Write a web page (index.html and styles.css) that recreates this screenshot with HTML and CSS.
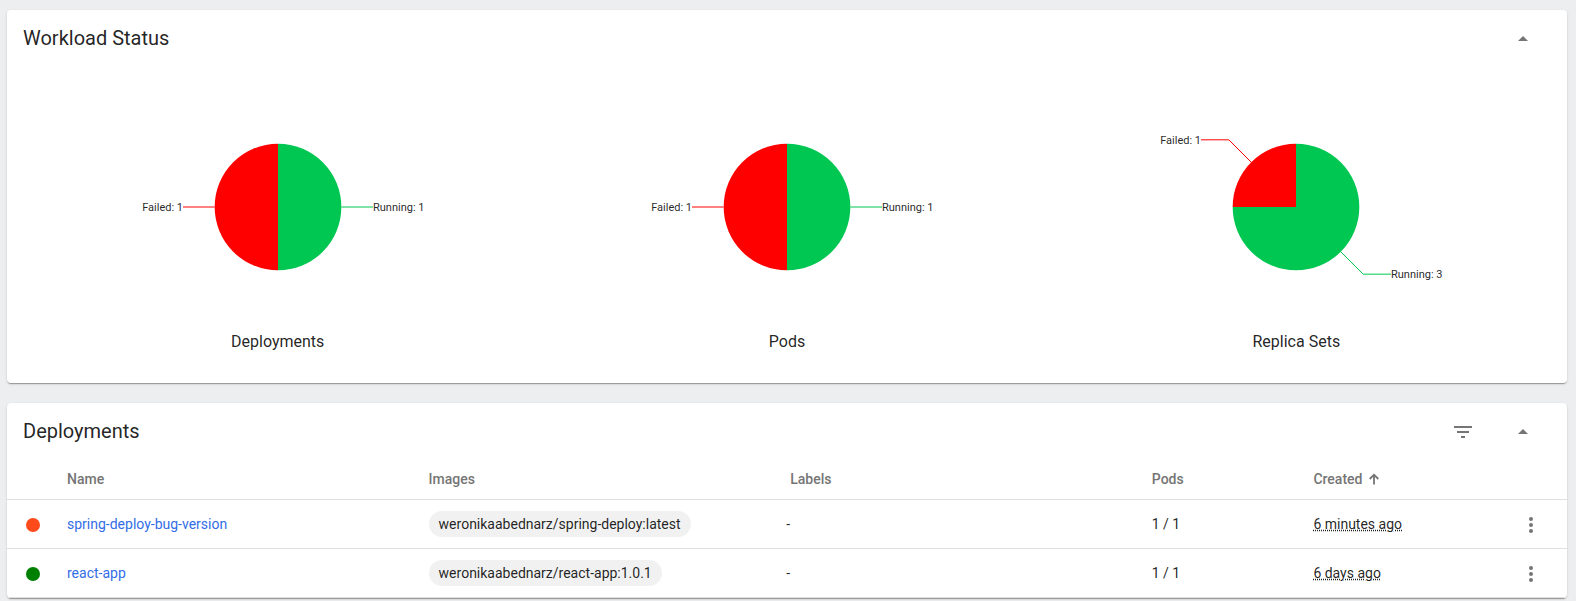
FILE: index.html
```html
<!DOCTYPE html>
<html lang="en">
<head>
<meta charset="utf-8">
<title>Workloads</title>
<link rel="stylesheet" href="styles.css">
</head>
<body>
<section class="card status-card">
  <header class="card-header">
    <h2 class="card-title">Workload Status</h2>
    <svg class="icon toggle" viewBox="0 0 24 24"><path d="M7 14l5-5 5 5z"/></svg>
  </header>
  <div class="charts">
    <figure class="chart">
      <svg class="pie" viewBox="-190 -132 380 264">
        <path class="running" d="M0 0V-63.33A63.33 63.33 0 0 1 0 63.33Z"/>
        <path class="failed" d="M0 0V63.33A63.33 63.33 0 0 1 0 -63.33Z"/>
        <path class="line-running" d="M63.33 0H95"/>
        <path class="line-failed" d="M-63.33 0H-95"/>
        <text class="label" x="95" y="4">Running: 1</text>
        <text class="label end" x="-95" y="4">Failed: 1</text>
      </svg>
      <figcaption class="caption">Deployments</figcaption>
    </figure>
    <figure class="chart">
      <svg class="pie" viewBox="-190 -132 380 264">
        <path class="running" d="M0 0V-63.33A63.33 63.33 0 0 1 0 63.33Z"/>
        <path class="failed" d="M0 0V63.33A63.33 63.33 0 0 1 0 -63.33Z"/>
        <path class="line-running" d="M63.33 0H95"/>
        <path class="line-failed" d="M-63.33 0H-95"/>
        <text class="label" x="95" y="4">Running: 1</text>
        <text class="label end" x="-95" y="4">Failed: 1</text>
      </svg>
      <figcaption class="caption">Pods</figcaption>
    </figure>
    <figure class="chart">
      <svg class="pie" viewBox="-190 -132 380 264">
        <path class="running" d="M0 0V-63.33A63.33 63.33 0 1 1 -63.33 0Z"/>
        <path class="failed" d="M0 0H-63.33A63.33 63.33 0 0 1 0 -63.33Z"/>
        <path class="line-running" d="M44.78 44.78L67.18 67.18H95"/>
        <path class="line-failed" d="M-44.78 -44.78L-67.18 -67.18H-95"/>
        <text class="label" x="95" y="71">Running: 3</text>
        <text class="label end" x="-95" y="-63">Failed: 1</text>
      </svg>
      <figcaption class="caption">Replica Sets</figcaption>
    </figure>
  </div>
</section>
<section class="card">
  <header class="card-header">
    <h2 class="card-title">Deployments</h2>
    <svg class="icon filter" viewBox="0 0 24 24"><path d="M10 18h4v-2h-4v2zM3 6v2h18V6H3zm3 7h12v-2H6v2z"/></svg>
    <svg class="icon toggle" viewBox="0 0 24 24"><path d="M7 14l5-5 5 5z"/></svg>
  </header>
  <div class="table">
    <div class="row head">
      <span></span><span>Name</span><span>Images</span><span>Labels</span><span>Pods</span>
      <span class="sorted">Created<svg class="arrow" viewBox="0 0 12 12"><path d="M6 11.5V2M1.7 6L6 1.7 10.3 6"/></svg></span><span></span>
    </div>
    <div class="row">
      <span class="dot pending"></span>
      <a class="link">spring-deploy-bug-version</a>
      <span><span class="chip">weronikaabednarz/spring-deploy:latest</span></span>
      <span class="empty">-</span><span>1 / 1</span>
      <span><span class="age">6 minutes ago</span></span>
      <svg class="icon menu" viewBox="0 0 24 24"><circle cx="12" cy="6" r="2"/><circle cx="12" cy="12" r="2"/><circle cx="12" cy="18" r="2"/></svg>
    </div>
    <div class="row">
      <span class="dot ok"></span>
      <a class="link">react-app</a>
      <span><span class="chip">weronikaabednarz/react-app:1.0.1</span></span>
      <span class="empty">-</span><span>1 / 1</span>
      <span><span class="age">6 days ago</span></span>
      <svg class="icon menu" viewBox="0 0 24 24"><circle cx="12" cy="6" r="2"/><circle cx="12" cy="12" r="2"/><circle cx="12" cy="18" r="2"/></svg>
    </div>
  </div>
</section>
</body>
</html>
```
FILE: styles.css
```css
* { box-sizing: border-box; }
body {
  margin: 0;
  padding: 10px 9px 0 7px;
  height: 601px;
  overflow: hidden;
  background: #edeef0;
  color: rgba(0, 0, 0, .87);
  font: 14px/20px Roboto, sans-serif;
}
.card {
  background: #fff;
  border-radius: 4px;
  box-shadow: 0 2px 1px -1px rgba(0, 0, 0, .2), 0 1px 1px rgba(0, 0, 0, .14), 0 1px 3px rgba(0, 0, 0, .12);
}
.status-card { height: 373px; margin-bottom: 20px; }
.card-header {
  display: flex;
  align-items: center;
  height: 56px;
  padding: 0 32px 0 16px;
}
.card-title { flex: 1; margin: 0; font-size: 20px; font-weight: 400; line-height: 32px; }
.icon { width: 24px; height: 24px; fill: #757575; }
.filter, .toggle { margin-top: 2px; }
.filter { margin-right: 36px; }
.charts { display: grid; grid-template-columns: repeat(3, 1fr); padding: 9px 16px 0; }
.chart { display: flex; flex-direction: column; align-items: center; margin: 0; }
.pie { width: 380px; height: 264px; }
.running { fill: #00c752; }
.failed { fill: #f00; }
.line-running, .line-failed { fill: none; stroke-width: 1; }
.line-running { stroke: #00c752; }
.line-failed { stroke: #f00; }
.label { font-size: 11px; fill: rgba(0, 0, 0, .87); }
.end { text-anchor: end; }
.caption { font-size: 16px; line-height: 24px; margin-top: -9px; }
.row {
  display: grid;
  grid-template-columns: 44px 361.6px 361.6px 361.6px 161.6px 206px 24px;
  align-items: center;
  height: 49px;
  padding-left: 16px;
  border-bottom: 1px solid #e0e0e0;
}
.head { height: 41px; color: #757575; font-weight: 500; }
.dot { width: 14px; height: 14px; margin: 2px 0 0 3px; border-radius: 50%; }
.pending { background: #ff4a1c; }
.ok { background: #008000; }
.link { color: #326de6; }
.chip {
  display: inline-block;
  height: 26px;
  padding: 0 10px;
  border-radius: 13px;
  background: #f1f1f1;
  line-height: 26px;
}
.empty { margin-left: -4px; }
.age { text-decoration: underline dotted; }
.sorted { display: flex; align-items: center; }
.arrow { width: 12px; height: 12px; margin-left: 6px; fill: none; stroke: #757575; stroke-width: 1.8; }
.menu { margin-top: 1px; }
```
